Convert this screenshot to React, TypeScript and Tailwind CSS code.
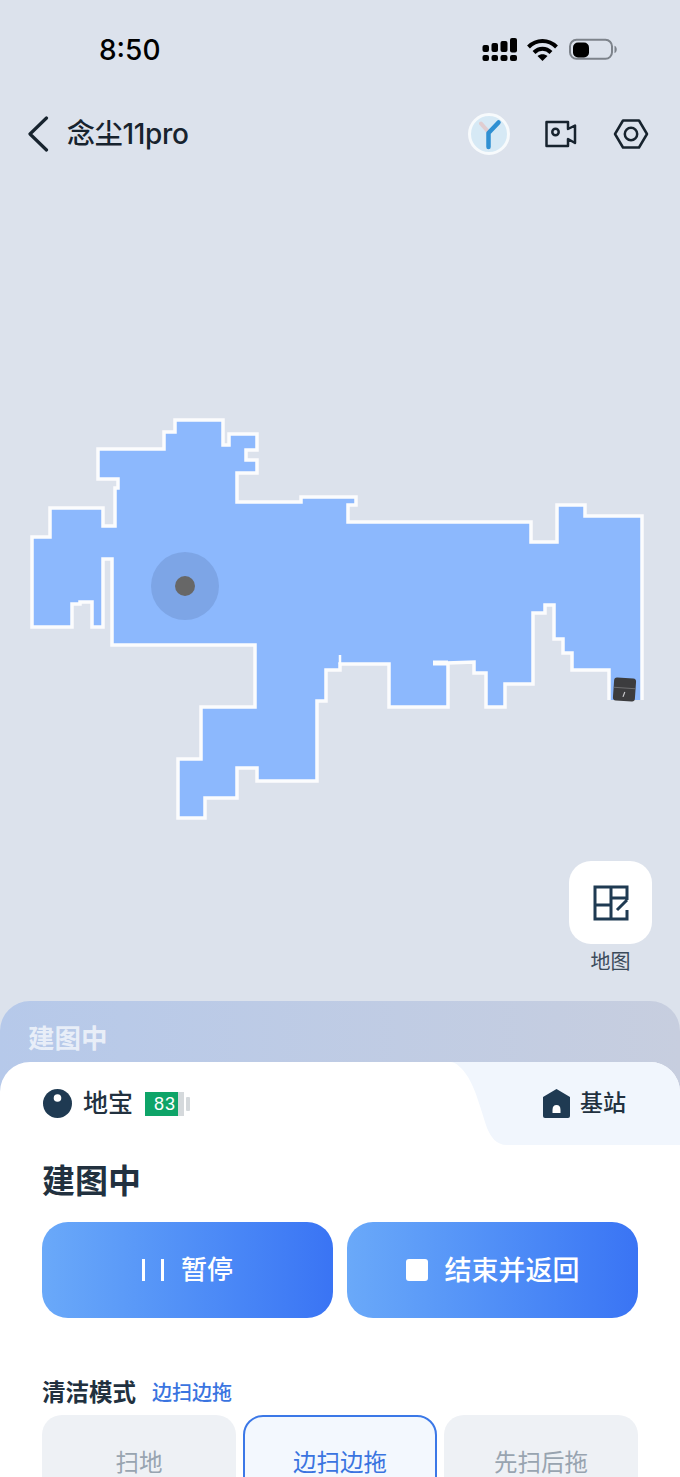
import React from 'react';

const OUTLINE =
  'M609 700 V670 H572 V653 H563 V639 H554 V605 H545 V613 H533 V684 H505 V707 H486 V673 H474 V662 L448 663 V707 H389 V664 H340 V670 H326 V701 H317 V781 H257 V768 H237 V798 H205 V818 H178 V759 H201 V707 H255 V645 H112 V559 H103 V627 H92 V602 H80 V604 H72 V627 H32 V537 H50 V508 H103 V526 H115 V488 H118 V479 H98 V449 H164 V432 H175 V420 H223 V445 H229 V434 H257 V450 H246 V460 H257 V473 H237 V502 H301 V497 H356 V505 H348 V522 H531 V542 H557 V505 H585 V516 H642 V700';

const modes = [
  { label: '扫地', active: false },
  { label: '边扫边拖', active: true },
  { label: '先扫后拖', active: false },
];

function StatusIcons() {
  return (
    <svg width="140" height="30" viewBox="480 35 140 30" className="block">
      <g fill="#000">
        <rect x="482.500" y="45" width="6.500" height="7" rx="2" />
        <rect x="491.500" y="43" width="6.500" height="9" rx="2" />
        <rect x="500.500" y="41" width="7" height="11" rx="2" />
        <rect x="510" y="38" width="7" height="14.500" rx="2" />
        <rect x="482.500" y="55" width="6.500" height="6" rx="2" />
        <rect x="491.500" y="55" width="6.500" height="6" rx="2" />
        <rect x="500.500" y="55" width="7" height="6" rx="2" />
        <rect x="510" y="55" width="7" height="6" rx="2" />
      </g>
      <g fill="none" stroke="#000" strokeWidth="4">
        <path d="M528.500 47 C536.500 39 548.500 39 556.500 47" />
        <path d="M534 52.500 C539 47.500 546 47.500 551 52.500" />
      </g>
      <path d="M537.500 56 C540.500 53.500 544.500 53.500 547.500 56 L542.500 61 Z" fill="#000" />
      <rect x="570" y="39.800" width="42" height="19" rx="6.500" fill="none" stroke="#7d838b" strokeWidth="2" />
      <rect x="573" y="42.500" width="16" height="15" rx="5" fill="#000" />
      <path d="M614.500 45.800 C617.500 47 617.500 52 614.500 53.200 Z" fill="#7d838b" />
    </svg>
  );
}

function FanBadge() {
  return (
    <svg width="42" height="42" viewBox="0 0 42 42" className="block">
      <circle cx="21" cy="21" r="19.500" fill="#d6e9f5" stroke="#f7fafc" strokeWidth="3" />
      <path d="M20.500 19 L13 10.500" stroke="#e3c7c8" strokeWidth="4" strokeLinecap="round" opacity="0.8" />
      <path d="M20.500 34 V20 L30.500 9.500" fill="none" stroke="#2f90d2" strokeWidth="4.500" strokeLinecap="round" strokeLinejoin="round" />
    </svg>
  );
}

function CameraIcon() {
  return (
    <svg width="34" height="30" viewBox="0 0 34 30" fill="none" stroke="#17232e" strokeWidth="2.500" strokeLinejoin="round" className="block">
      <path d="M2.500 3 H24 V10 L31 6.500 V24 L24 20 V27 H2.500 Z" />
      <circle cx="11.500" cy="13" r="3.200" />
    </svg>
  );
}

function HexIcon() {
  return (
    <svg width="36" height="32" viewBox="0 0 36 32" fill="none" stroke="#17232e" strokeWidth="2.500" strokeLinejoin="round" className="block">
      <path d="M2 16 L10 2.500 H26 L34 16 L26 29.500 H10 Z" />
      <circle cx="18" cy="16" r="6.200" />
    </svg>
  );
}

function MapPlanIcon() {
  return (
    <svg width="36" height="36" viewBox="0 0 36 36" fill="none" stroke="#1f3a52" strokeWidth="3" className="block">
      <path d="M34 15 V2 H2 V34 H34 V25" />
      <path d="M18 2 V34 M2 20 H18 M18 13 H34 M34 15 L24 25" />
    </svg>
  );
}

export default function App() {
  return (
    <div className="w-[680px] h-[1477px] overflow-hidden flex flex-col bg-[#dce2ec] font-['Inter','Noto_Sans_CJK_SC',sans-serif] text-[#22313f]">
      <div className="h-[100px] shrink-0 flex items-center justify-between pl-[99px] pr-[60px]">
        <span className="text-[28px] font-medium text-black leading-none">8:50</span>
        <StatusIcons />
      </div>

      <div className="h-[68px] shrink-0 flex items-center pl-[26px] pr-[31px]">
        <svg width="24" height="36" viewBox="0 0 24 36" fill="none" stroke="#17232e" strokeWidth="3.200" strokeLinecap="round" strokeLinejoin="round" className="block">
          <path d="M20.500 2 L4 18 L20.500 34" />
        </svg>
        <span className="ml-[17px] text-[28px] font-medium text-[#17232e] leading-none tracking-[-0.3px]">念尘11pro</span>
        <div className="ml-auto flex items-center gap-[34px]">
          <FanBadge />
          <div className="flex items-center gap-[35px]">
            <CameraIcon />
            <HexIcon />
          </div>
        </div>
      </div>

      <svg width="680" height="690" viewBox="0 168 680 690" className="block shrink-0">
        <path d={OUTLINE + ' Z'} fill="#8cb8fd" />
        <path d={OUTLINE} fill="none" stroke="#fbfcfd" strokeWidth="3.500" />
        <path d="M448 663 H433" stroke="#fbfcfd" strokeWidth="5" />
        <path d="M340 664 V655" stroke="#fbfcfd" strokeWidth="2.500" />
        <circle cx="185" cy="586" r="34" fill="#7da5e6" />
        <circle cx="185" cy="586" r="10" fill="#676767" />
        <g transform="rotate(4 624.500 689.500)">
          <rect x="613.500" y="678" width="22" height="23" rx="3" fill="#3c3c3e" />
          <path d="M613.500 688 H635.500" stroke="#77777a" strokeWidth="0.800" />
          <path d="M623.500 697 L625 692" stroke="#c9c9cc" strokeWidth="1.200" />
        </g>
      </svg>

      <div className="h-[143px] shrink-0 flex flex-col items-end pt-[3px] pr-[28px]">
        <div className="w-[83px] h-[83px] rounded-[22px] bg-white flex items-center justify-center">
          <MapPlanIcon />
        </div>
        <span className="w-[83px] mt-[4px] text-center text-[20px] leading-[28px] text-[#3b4a5a]">地图</span>
      </div>

      <div className="flex-1 flex flex-col rounded-t-[30px] bg-gradient-to-r from-[#b6c9ea] to-[#c7cedf]">
        <div className="h-[61px] shrink-0 flex items-center pl-[28px] pt-[13px]">
          <span className="text-[26.500px] font-bold leading-none text-white/70">建图中</span>
        </div>

        <div className="relative flex-1 overflow-hidden rounded-t-[30px] bg-white">
          <svg width="230" height="83" viewBox="0 0 230 83" className="absolute right-0 top-0 block">
            <path d="M0 0 H230 V83 H57 C46 83 41 75 37 66 C31 48 26 28 18 15 C12 6 6 0 0 0 Z" fill="#f1f6fd" />
          </svg>

          <div className="relative h-[83px] flex items-center pl-[43px] pr-[54px]">
            <svg width="29" height="29" viewBox="0 0 29 29" className="block">
              <circle cx="14.500" cy="14.500" r="14.500" fill="#1f3a52" />
              <circle cx="14.500" cy="9" r="3.800" fill="#fff" />
            </svg>
            <span className="ml-[11px] text-[25px] font-medium leading-none">地宝</span>
            <div className="ml-[12px] flex items-center">
              <div className="w-[33px] h-[24px] bg-[#0ea468] flex items-center justify-end pr-[2px] text-[18px] tracking-[1px] leading-none text-white font-['Liberation_Sans',sans-serif]">83</div>
              <div className="w-[6px] h-[24px] bg-[#d5d9dc]"></div>
              <div className="ml-[2px] w-[4px] h-[14px] rounded-[1px] bg-[#d5d9dc]"></div>
            </div>
            <svg width="27" height="29" viewBox="0 0 27 29" className="block ml-auto">
              <path d="M13.500 0 L27 8 V27 Q27 29 25 29 H2 Q0 29 0 27 V8 Z" fill="#1f3a52" />
              <path d="M9.500 21 Q9.500 16 13.500 16 Q17.500 16 17.500 21 V24 H9.500 Z" fill="#fff" />
            </svg>
            <span className="ml-[10px] text-[23px] font-medium leading-none">基站</span>
          </div>

          <div className="h-[77px] flex items-center pl-[42px] pb-[5px]">
            <h1 className="text-[33px] font-bold leading-none">建图中</h1>
          </div>

          <div className="px-[42px] grid grid-cols-2 gap-[14px]">
            <button className="h-[96px] rounded-[26px] bg-gradient-to-r from-[#6aa9f9] to-[#3a74f4] text-white flex items-center justify-center">
              <span className="flex gap-[16px]">
                <span className="w-[3px] h-[22px] bg-white"></span>
                <span className="w-[3px] h-[22px] bg-white"></span>
              </span>
              <span className="ml-[17px] text-[26px] font-medium leading-none">暂停</span>
            </button>
            <button className="h-[96px] rounded-[26px] bg-gradient-to-r from-[#6aa9f9] to-[#3a74f4] text-white flex items-center justify-center">
              <span className="w-[22px] h-[22px] rounded-[3px] bg-white"></span>
              <span className="ml-[17px] text-[27px] font-medium leading-none">结束并返回</span>
            </button>
          </div>

          <div className="mt-[60px] h-[30px] px-[42px] flex items-center">
            <span className="text-[23.500px] font-bold leading-none">清洁模式</span>
            <span className="ml-[16px] text-[20px] font-medium leading-none text-[#3a74e0]">边扫边拖</span>
          </div>

          <div className="mt-[7px] px-[42px] grid grid-cols-3 gap-[7px]">
            {modes.map((m) => (
              <div
                key={m.label}
                className={
                  m.active
                    ? 'h-[100px] rounded-[20px] border-2 border-[#3b78e7] bg-[#f3f8fe] flex justify-center pt-[29px] text-[23.500px] leading-[34px] text-[#3a74e0]'
                    : 'h-[100px] rounded-[20px] bg-[#eef1f5] flex justify-center pt-[31px] text-[23.500px] leading-[34px] text-[#98a4b0]'
                }
              >
                {m.label}
              </div>
            ))}
          </div>
        </div>
      </div>
    </div>
  );
}
